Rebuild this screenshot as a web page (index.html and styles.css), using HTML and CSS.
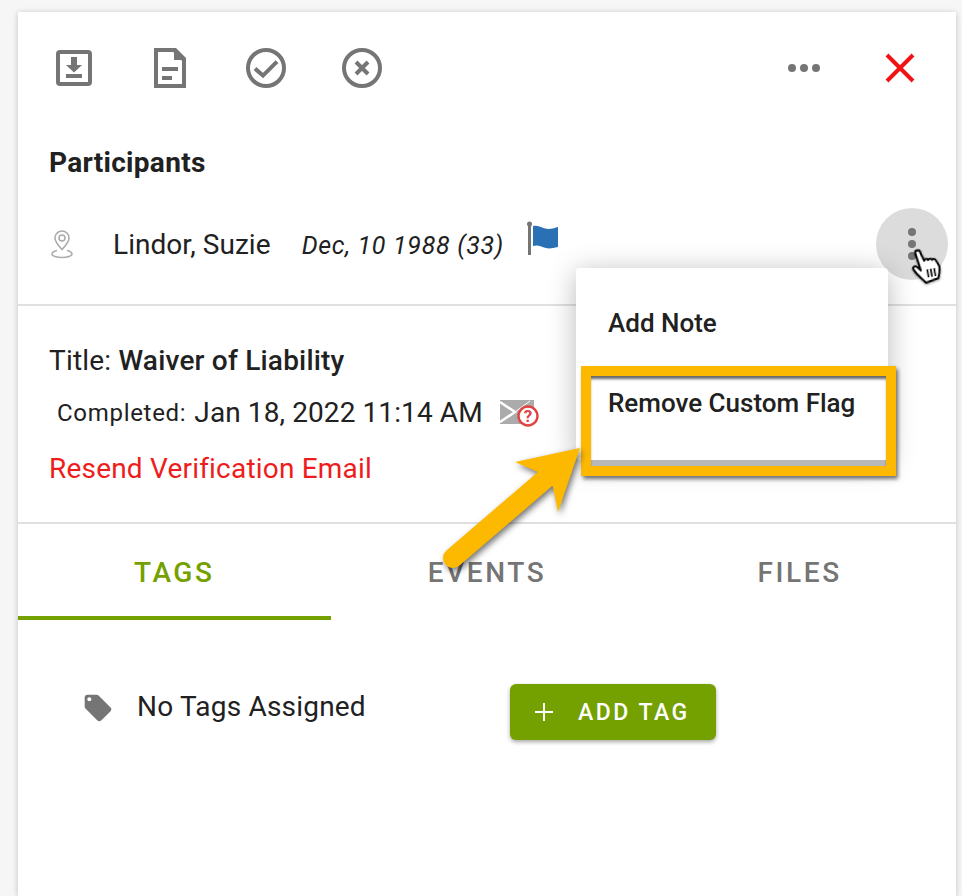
FILE: index.html
```html
<!DOCTYPE html>
<html lang="en">
<head>
<meta charset="utf-8">
<title>Participants</title>
<link rel="stylesheet" href="styles.css">
</head>
<body>
<main class="card">
  <div class="toolbar">
    <span class="tool"><svg viewBox="0 0 24 24" class="icon48"><rect x="4" y="4" width="16" height="16" rx="1" class="ln"/><path d="M10.5 6.5h3v4h2.5L12 14.2 8 10.500h2.500z" class="fl"/><rect x="8" y="15" width="8" height="2" class="fl"/></svg></span>
    <span class="tool"><svg viewBox="0 0 24 24" class="icon48"><path d="M5 3h9l5 5v13H5z" class="ln"/><path d="M14 2h1l5 5v1h-6z" class="fl"/><rect x="8" y="11.500" width="8" height="2" class="fl"/><rect x="8" y="16" width="5" height="2" class="fl"/></svg></span>
    <span class="tool"><svg viewBox="0 0 24 24" class="icon48"><circle cx="12" cy="12" r="9" class="ln"/><path d="M6.500 12.300l4 3.500 7-7" class="ln"/></svg></span>
    <span class="tool"><svg viewBox="0 0 24 24" class="icon48"><circle cx="12" cy="12" r="9" class="ln"/><path d="M9 9l6 6M15 9l-6 6" class="ln"/></svg></span>
    <span class="tool tool-right"><svg viewBox="0 0 24 24" class="icon48"><circle cx="6" cy="12" r="2" class="fl"/><circle cx="12" cy="12" r="2" class="fl"/><circle cx="18" cy="12" r="2" class="fl"/></svg></span>
    <span class="tool"><svg viewBox="0 0 24 24" class="icon48"><path d="M5.500 5.500l13 13M18.500 5.500l-13 13" class="close-x"/></svg></span>
  </div>

  <h2 class="heading">Participants</h2>

  <div class="participant">
    <svg viewBox="0 0 24 32" class="pin"><path d="M12 20.500C8 16 5 13 5 9a7 7 0 0 1 14 0c0 4-3 7-7 11.500z" class="pin-ln"/><circle cx="12" cy="9" r="3" class="pin-ln"/><path d="M7 21.500c-3 .8-5 2-5 3.500 0 2 4.500 3.500 10 3.500s10-1.500 10-3.500c0-1.500-2-2.700-5-3.500" class="pin-ln"/></svg>
    <span class="name">Lindor, Suzie</span>
    <span class="dob">Dec, 10 1988 (33)</span>
    <svg viewBox="0 0 32 34" class="flag"><rect x="1" y="3" width="3" height="31" class="pole"/><circle cx="2.500" cy="3" r="2.500" class="pole"/><path d="M6 5c5-1 7 1 12 2.500 4 1 7 .5 13-1.500v20c-6 1.500-9 2-13 .8C13 25 11 23.500 6 25z" class="flag-cloth"/></svg>
    <span class="kebab"><i></i><i></i><i></i></span>
  </div>

  <section class="info">
    <p class="title-line">Title: <b>Waiver of Liability</b></p>
    <p class="completed"><span class="completed-label">Completed:</span> Jan 18, 2022 11:14 AM
      <svg viewBox="0 0 40 28" class="mail"><path d="M1 1h34v24H1z" class="mail-body"/><path d="M1 3l15 10L1 23" class="mail-cut"/><path d="M16 13L31 2" class="mail-cut-thin"/><circle cx="29" cy="17" r="9.500" class="q-ring"/><text x="29" y="23" class="q-mark">?</text></svg>
    </p>
    <p class="resend">Resend Verification Email</p>
  </section>

  <nav class="tabs">
    <span class="tab tab-active">TAGS</span>
    <span class="tab">EVENTS</span>
    <span class="tab">FILES</span>
  </nav>

  <div class="tags-row">
    <svg viewBox="0 0 24 24" class="tag-icon"><path d="M21.410 11.580l-9-9C12.050 2.220 11.550 2 11 2H4c-1.100 0-2 .9-2 2v7c0 .55.22 1.050.59 1.420l9 9c.36.36.86.58 1.410.58.55 0 1.050-.22 1.410-.59l7-7c.37-.36.59-.86.59-1.410 0-.55-.23-1.060-.59-1.420zM5.500 7C4.670 7 4 6.330 4 5.500S4.670 4 5.500 4 7 4.670 7 5.500 6.330 7 5.500 7z" class="fl"/></svg>
    <span class="no-tags">No Tags Assigned</span>
    <span class="add-tag"><svg viewBox="0 0 20 20" class="plus"><path d="M10 1v18M1 10h18"/></svg>ADD TAG</span>
  </div>

  <div class="menu">
    <div class="menu-item">Add Note</div>
    <div class="menu-item">Remove Custom Flag</div>
  </div>
  <div class="highlight"></div>
  <svg class="arrow" viewBox="0 0 180 150"><path d="M36 137L128 58" class="arrow-shaft"/><path d="M163 27L98 41l23 10 15 15 5 25z" class="arrow-head"/></svg>
  <svg class="hand" viewBox="0 0 36 38"><path d="M6.500 5a2.500 2.500 0 0 1 5 0L14 14c.5-2 3.500-2 4 0 .5-1.500 3.500-1.500 4 .5.5-1 3-1 3.500 1L28 22c0 5-1.500 8-3 11.500L12 36C9 31 5 28 2 21c-1-2.500 2-4.500 4-2l3 4z" class="hand-shape"/><path d="M15.500 23v8M19 23v8M22.500 23v8" class="hand-lines"/></svg>
</main>
</body>
</html>
```

FILE: styles.css
```css
* { box-sizing: border-box; }
html, body { margin: 0; height: 896px; overflow: hidden; }
body { background: #f6f6f6; font-family: Roboto, "Liberation Sans", sans-serif; color: #212121; }
p, h2 { margin: 0; }

.card { position: relative; margin: 12px 6px 0 18px; height: 884px; background: #fff; box-shadow: 0 1px 6px rgba(0,0,0,.22); }

.toolbar { display: flex; height: 112px; padding: 0 8px; align-items: center; }
.tool { width: 96px; height: 48px; display: flex; justify-content: center; }
.tool-right { margin-left: auto; }
.icon48 { width: 48px; height: 48px; }
.ln { fill: none; stroke: #757575; stroke-width: 2; }
.fl { fill: #757575; }
.close-x { fill: none; stroke: #f01414; stroke-width: 2; }

.heading { padding: 2px 0 0 31px; font-size: 28px; font-weight: 700; line-height: 74px; height: 76px; letter-spacing: .3px; }

.participant { display: flex; align-items: center; height: 88px; margin-bottom: 16px; padding: 0 8px 0 32px; }
.pin { width: 24px; height: 32px; margin-top: 2px; }
.pin-ln { fill: none; stroke: #ababab; stroke-width: 1.6; }
.name { margin-left: 39px; font-size: 28px; letter-spacing: .05px; }
.dob { margin-left: 31px; font-size: 25px; font-style: italic; letter-spacing: .7px; margin-top: 3px; }
.flag { width: 32px; height: 34px; margin: -12px 0 0 23px; }
.pole { fill: #757575; }
.flag-cloth { fill: #2a70b5; }
.kebab { margin-left: auto; width: 72px; height: 72px; border-radius: 50%; background: #dcdcdc; display: flex; flex-direction: column; align-items: center; justify-content: center; gap: 4px; }
.kebab i { width: 8px; height: 8px; border-radius: 50%; background: #757575; }

.info { height: 220px; border-top: 2px solid #e0e0e0; border-bottom: 2px solid #e0e0e0; padding: 35px 0 0 31px; font-size: 28px; letter-spacing: .2px; }
.title-line { line-height: 40px; }
.title-line b { font-weight: 500; }
.completed { display: flex; align-items: center; line-height: 40px; margin-top: 12px; padding-left: 8px; gap: 8px; letter-spacing: .1px; }
.completed-label { font-size: 24px; letter-spacing: .7px; }
.mail { width: 40px; height: 28px; margin-left: 8px; }
.mail-body { fill: #ababab; }
.mail-cut { fill: none; stroke: #fff; stroke-width: 2.5; }
.mail-cut-thin { fill: none; stroke: #fff; stroke-width: 1; }
.q-ring { fill: #fff; stroke: #e04444; stroke-width: 2.4; }
.q-mark { fill: #e04444; font-size: 17px; font-weight: 700; text-anchor: middle; font-family: Roboto, sans-serif; }
.resend { color: #ee1c1c; line-height: 40px; margin-top: 16px; }

.tabs { display: grid; grid-template-columns: repeat(3, 1fr); height: 96px; }
.tab { display: flex; align-items: center; justify-content: center; font-size: 28px; font-weight: 500; letter-spacing: 2.6px; color: #757575; }
.tab-active { color: #74a000; box-shadow: inset 0 -4px 0 #74a000; }

.tags-row { display: flex; align-items: flex-start; padding: 64px 0 0 64px; }
.tag-icon { width: 32px; height: 32px; margin-top: 8px; }
.no-tags { width: 396px; padding-left: 23px; font-size: 28px; line-height: 46px; letter-spacing: .2px; }
.add-tag { display: flex; align-items: center; width: 206px; height: 56px; padding-left: 24px; border-radius: 6px; background: #74a000; color: #fff; font-size: 23px; font-weight: 500; letter-spacing: 2.5px; box-shadow: 0 2px 4px rgba(0,0,0,.35); }
.plus { width: 20px; height: 20px; margin-right: 24px; fill: none; stroke: #fff; stroke-width: 2; }

.menu { position: absolute; left: 558px; top: 256px; width: 312px; height: 192px; padding-top: 15px; background: #fff; border-radius: 4px; box-shadow: 0 4px 28px rgba(0,0,0,.28); }
.menu-item { height: 80px; padding-left: 32px; display: flex; align-items: center; font-size: 26px; font-weight: 500; }

.highlight { position: absolute; left: 563px; top: 354px; width: 315px; height: 110px; border: 10px solid #fdb900; box-shadow: 2px 3px 4px rgba(0,0,0,.55), inset 0 4px 3px -1px rgba(0,0,0,.6), inset 0 -6px 0 #b8b8b8; }

.arrow { position: absolute; left: 399px; top: 409px; width: 180px; height: 150px; filter: drop-shadow(2px 3px 3px rgba(0,0,0,.55)); }
.arrow-shaft { fill: none; stroke: #fdb900; stroke-width: 20; stroke-linecap: round; }
.arrow-head { fill: #fdb900; }

.hand { position: absolute; left: 893px; top: 234px; width: 36px; height: 38px; transform: rotate(-10deg); filter: drop-shadow(0 1px 1px rgba(0,0,0,.4)); }
.hand-shape { fill: #fff; stroke: #000; stroke-width: 2; stroke-linejoin: round; }
.hand-lines { fill: none; stroke: #000; stroke-width: 1.6; }
```
